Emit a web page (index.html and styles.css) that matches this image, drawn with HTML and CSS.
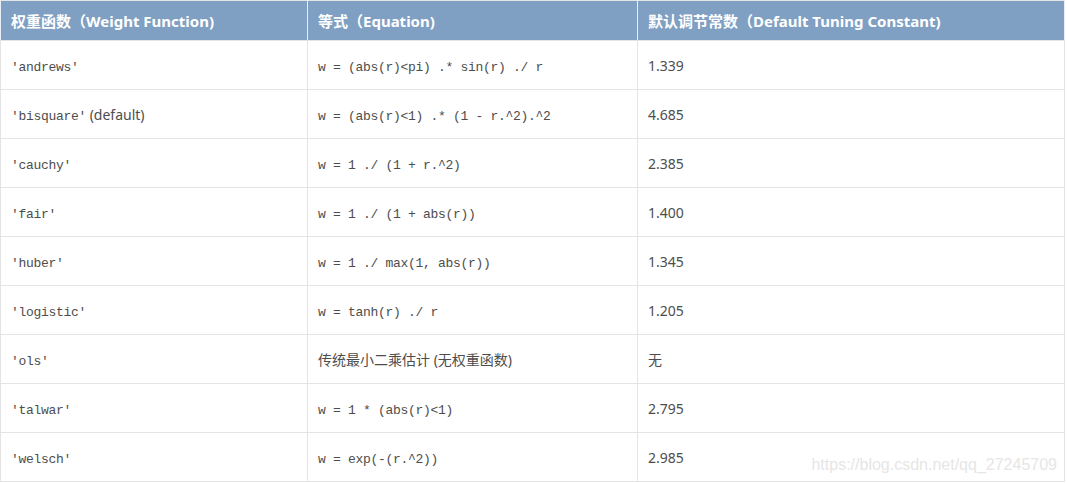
FILE: index.html
```html
<!DOCTYPE html>
<html lang="zh-CN">
<head>
<meta charset="utf-8">
<title>Weight Functions</title>
<link rel="stylesheet" href="styles.css">
</head>
<body>
<div class="wrap">
  <table class="wt">
    <colgroup>
      <col class="c1"><col class="c2"><col class="c3">
    </colgroup>
    <thead>
      <tr>
        <th>权重函数（Weight Function)</th>
        <th>等式（Equation)</th>
        <th>默认调节常数（Default Tuning Constant)</th>
      </tr>
    </thead>
    <tbody>
      <tr><td><code>'andrews'</code></td><td><code>w = (abs(r)&lt;pi) .* sin(r) ./ r</code></td><td>1.339</td></tr>
      <tr><td><code>'bisquare'</code> (default)</td><td><code>w = (abs(r)&lt;1) .* (1 - r.^2).^2</code></td><td>4.685</td></tr>
      <tr><td><code>'cauchy'</code></td><td><code>w = 1 ./ (1 + r.^2)</code></td><td>2.385</td></tr>
      <tr><td><code>'fair'</code></td><td><code>w = 1 ./ (1 + abs(r))</code></td><td>1.400</td></tr>
      <tr><td><code>'huber'</code></td><td><code>w = 1 ./ max(1, abs(r))</code></td><td>1.345</td></tr>
      <tr><td><code>'logistic'</code></td><td><code>w = tanh(r) ./ r</code></td><td>1.205</td></tr>
      <tr><td><code>'ols'</code></td><td>传统最小二乘估计 (无权重函数)</td><td>无</td></tr>
      <tr><td><code>'talwar'</code></td><td><code>w = 1 * (abs(r)&lt;1)</code></td><td>2.795</td></tr>
      <tr><td><code>'welsch'</code></td><td><code>w = exp(-(r.^2))</code></td><td>2.985</td></tr>
    </tbody>
  </table>
  <div class="watermark">https://blog.csdn.net/qq_27245709</div>
</div>
</body>
</html>
```

FILE: styles.css
```css
html, body {
  margin: 0;
  padding: 0;
  background: #ffffff;
}
.wrap {
  position: relative;
  width: 1064px;
}
.wt {
  border-collapse: collapse;
  table-layout: fixed;
  width: 1064px;
  font-family: "Noto Sans", "Noto Sans CJK SC", sans-serif;
  font-size: 14px;
  color: #4d4d4d;
}
.c1 { width: 307px; }
.c2 { width: 330px; }
.c3 { width: 427px; }
.wt th, .wt td {
  border: 1px solid #e4e4e4;
  padding: 0 10px;
  text-align: left;
  vertical-align: middle;
  white-space: nowrap;
}
.wt th {
  background: #7f9fc3;
  color: #ffffff;
  font-weight: 700;
  font-size: 15px;
  height: 39px;
  border-color: #e4e4e4 #e8eef5;
}
.wt td {
  height: 48px;
}
.wt code {
  font-family: "Liberation Mono", monospace;
  font-size: 13px;
  letter-spacing: -0.3px;
  color: #4d4d4d;
}
.watermark {
  position: absolute;
  right: 7px;
  bottom: 8px;
  font-family: "Liberation Sans", sans-serif;
  font-size: 16px;
  color: #e6e6e6;
}
```
